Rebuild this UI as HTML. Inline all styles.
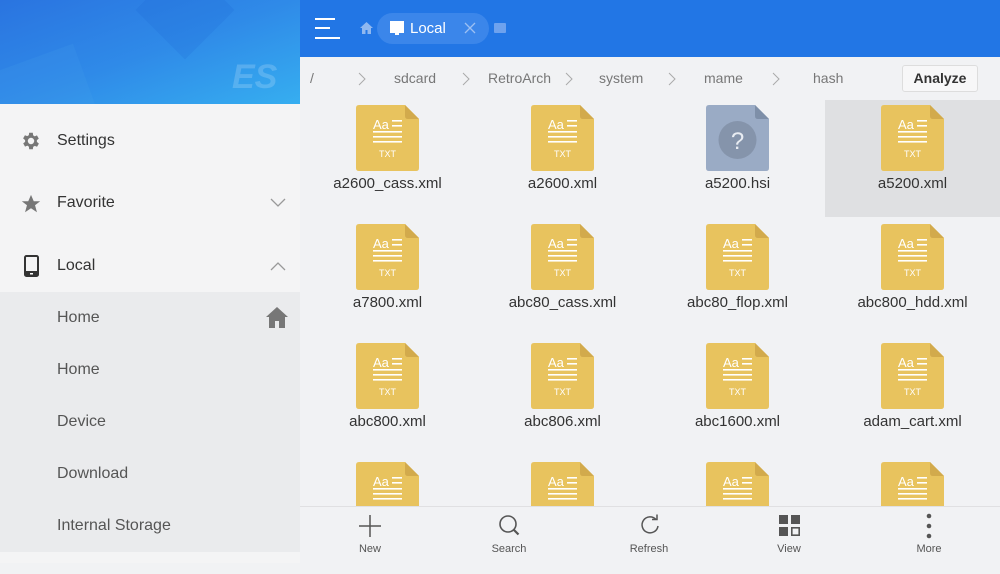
<!DOCTYPE html>
<html><head><meta charset="utf-8"><style>
*{margin:0;padding:0;box-sizing:border-box}
body{width:1000px;height:563px;overflow:hidden;font-family:"Liberation Sans",sans-serif;background:#f1f2f4;position:relative}
.abs{position:absolute}
#side{left:0;top:0;width:300px;height:563px;background:#f4f4f5}
#hero{left:0;top:0;width:300px;height:104px;background:linear-gradient(160deg,#2a74e0 0%,#2f8ae8 50%,#36aef0 100%);overflow:hidden}
.mi{position:absolute;left:57px;font-size:16px;color:#333}
.si{position:absolute;left:57px;font-size:16px;color:#555}
#sub{left:0;top:292px;width:300px;height:260px;background:#eaebed}
#top{left:300px;top:0;width:700px;height:57px;background:#2276e5}
#crumb{left:300px;top:57px;width:700px;height:43px;background:#f1f2f4;font-size:14px;color:#777}
.cr{position:absolute;top:13px}
.ch{position:absolute;top:15px}
.cell{position:absolute;width:175px;height:117px}
.cell svg{position:absolute;left:56px;top:5px}
.cell span{position:absolute;left:0;width:175px;text-align:center;top:75px;font-size:15px;color:#333}
#bot{left:300px;top:506px;width:700px;height:57px;background:#f1f2f4;border-top:1px solid #e0e0e2}
.bt{position:absolute;top:36px;width:80px;text-align:center;font-size:11px;color:#555}
</style></head><body>
<svg width="0" height="0" style="position:absolute"><defs>
<symbol id="f" viewBox="0 0 63 66"><path d="M3 0H49L63 14V63Q63 66 60 66H3Q0 66 0 63V3Q0 0 3 0Z" fill="#e8c35e"/><path d="M49 0L63 14H52Q49 14 49 11Z" fill="#d2aa4c"/>
<text x="17" y="24" font-family="Liberation Sans" font-size="13" fill="#fff">Aa</text><rect x="36" y="15" width="10" height="1.6" fill="#fff"/><rect x="36" y="20" width="10" height="1.6" fill="#fff"/><rect x="17" y="26" width="29" height="1.6" fill="#fff"/><rect x="17" y="31" width="29" height="1.6" fill="#fff"/><rect x="17" y="36" width="29" height="1.6" fill="#fff"/><text x="31.5" y="52" text-anchor="middle" font-family="Liberation Sans" font-size="9" fill="#fff">TXT</text></symbol>
<symbol id="c" viewBox="0 0 8 14"><path d="M1 1l6 6-6 6" fill="none" stroke="#aaa" stroke-width="1"/></symbol>
</defs></svg>
<div id="side" class="abs"></div>
<div id="hero" class="abs">
<div class="abs" style="left:150px;top:-25px;width:70px;height:70px;background:rgba(30,100,210,.18);transform:rotate(45deg)"></div>
<div class="abs" style="left:-20px;top:60px;width:110px;height:80px;background:rgba(80,170,240,.12);transform:rotate(-20deg)"></div>
<div class="abs" style="left:232px;top:58px;font-size:34px;font-weight:bold;font-style:italic;color:rgba(255,255,255,.18)">ES</div>
</div>
<svg class="abs" style="left:20px;top:130px" width="22" height="22" viewBox="0 0 24 24"><path fill="#777" d="M19.4 13a7.5 7.5 0 000-2l2.1-1.6-2-3.5-2.5 1a7 7 0 00-1.7-1L15 3h-4l-.4 2.7a7 7 0 00-1.7 1l-2.5-1-2 3.5L6.6 11a7.5 7.5 0 000 2l-2.1 1.6 2 3.5 2.5-1a7 7 0 001.7 1L11 21h4l.4-2.7a7 7 0 001.7-1l2.5 1 2-3.5zM13 15.5a3.5 3.5 0 110-7 3.5 3.5 0 010 7z" transform="translate(-1 0)"/></svg>
<div class="mi" style="top:132px">Settings</div>
<svg class="abs" style="left:20px;top:193px" width="22" height="22" viewBox="0 0 24 24"><path fill="#777" d="M12 2l3 7h7l-5.6 4.4 2.1 7.6L12 16.6 5.5 21l2.1-7.6L2 9h7z"/></svg>
<div class="mi" style="top:194px">Favorite</div>
<svg class="abs" style="left:270px;top:198px" width="16" height="10"><path d="M1 1l7 7 7-7" fill="none" stroke="#999" stroke-width="1.3"/></svg>
<svg class="abs" style="left:24px;top:255px" width="16" height="22"><rect x="1" y="1" width="13" height="20" rx="1.5" fill="none" stroke="#333" stroke-width="2"/><rect x="1" y="16" width="13" height="5" fill="#333"/><rect x="6" y="18" width="3" height="1.5" fill="#fff"/></svg>
<div class="mi" style="top:257px">Local</div>
<svg class="abs" style="left:270px;top:261px" width="16" height="10"><path d="M1 9l7-7 7 7" fill="none" stroke="#999" stroke-width="1.3"/></svg>
<div id="sub" class="abs"></div>
<div class="si" style="top:309px">Home</div>
<svg class="abs" style="left:266px;top:307px" width="22" height="21" viewBox="0 0 22 21"><path fill="#777" d="M11 0L0 10h3v11h6v-7h4v7h6V10h3z"/></svg>
<div class="si" style="top:361px">Home</div>
<div class="si" style="top:413px">Device</div>
<div class="si" style="top:465px">Download</div>
<div class="si" style="top:517px">Internal Storage</div>

<div id="top" class="abs">
<div class="abs" style="left:15px;top:18px;width:20px;height:2px;background:#fff"></div>
<div class="abs" style="left:15px;top:27px;width:15px;height:2px;background:#fff"></div>
<div class="abs" style="left:15px;top:37px;width:25px;height:2px;background:#fff"></div>
<svg class="abs" style="left:60px;top:22px" width="13" height="12"><path fill="#8fb8f0" d="M6.5 0L0 6h2v6h3.5V8h2v4H11V6h2z"/></svg>
<div class="abs" style="left:77px;top:13px;width:112px;height:31px;border-radius:16px;background:#3b86ea"></div>
<svg class="abs" style="left:89px;top:21px" width="16" height="14"><path fill="#fff" d="M1 0h14v12H10v2H6v-2H1z"/></svg>
<div class="abs" style="left:110px;top:20px;font-size:15px;color:#fff">Local</div>
<svg class="abs" style="left:164px;top:22px" width="12" height="12"><path d="M1 1l10 10M11 1L1 11" stroke="#9cc0f3" stroke-width="1.3"/></svg>
<div class="abs" style="left:194px;top:23px;width:12px;height:10px;background:#6ea2ee;border-radius:1px"></div>
</div>
<div id="crumb" class="abs">
<span class="cr" style="left:10px">/</span>
<svg class="ch" style="left:58px" width="8" height="14"><use href="#c"/></svg>
<span class="cr" style="left:94px">sdcard</span>
<svg class="ch" style="left:162px" width="8" height="14"><use href="#c"/></svg>
<span class="cr" style="left:188px">RetroArch</span>
<svg class="ch" style="left:265px" width="8" height="14"><use href="#c"/></svg>
<span class="cr" style="left:299px">system</span>
<svg class="ch" style="left:368px" width="8" height="14"><use href="#c"/></svg>
<span class="cr" style="left:404px">mame</span>
<svg class="ch" style="left:472px" width="8" height="14"><use href="#c"/></svg>
<span class="cr" style="left:513px">hash</span>
<div class="abs" style="left:602px;top:8px;width:76px;height:27px;background:#f7f7f8;border:1px solid #ddd;border-radius:3px;font-size:14px;font-weight:bold;color:#333;text-align:center;line-height:25px">Analyze</div>
</div>

<div class="abs" style="left:825px;top:100px;width:175px;height:117px;background:#dfe0e2"></div>
<div class="cell" style="left:300px;top:100px"><svg width="63" height="66"><use href="#f"/></svg><span>a2600_cass.xml</span></div>
<div class="cell" style="left:475px;top:100px"><svg width="63" height="66"><use href="#f"/></svg><span>a2600.xml</span></div>
<div class="cell" style="left:650px;top:100px"><svg width="63" height="66" viewBox="0 0 63 66"><path d="M3 0H49L63 14V63Q63 66 60 66H3Q0 66 0 63V3Q0 0 3 0Z" fill="#9aabc5"/><path d="M49 0L63 14H52Q49 14 49 11Z" fill="#7e8fa8"/><circle cx="31.5" cy="35" r="19" fill="#8594ab"/><text x="31.5" y="44" text-anchor="middle" font-family="Liberation Sans" font-size="24" fill="#e8ecf2">?</text></svg><span>a5200.hsi</span></div>
<div class="cell" style="left:825px;top:100px"><svg width="63" height="66"><use href="#f"/></svg><span>a5200.xml</span></div>
<div class="cell" style="left:300px;top:219px"><svg width="63" height="66"><use href="#f"/></svg><span>a7800.xml</span></div>
<div class="cell" style="left:475px;top:219px"><svg width="63" height="66"><use href="#f"/></svg><span>abc80_cass.xml</span></div>
<div class="cell" style="left:650px;top:219px"><svg width="63" height="66"><use href="#f"/></svg><span>abc80_flop.xml</span></div>
<div class="cell" style="left:825px;top:219px"><svg width="63" height="66"><use href="#f"/></svg><span>abc800_hdd.xml</span></div>
<div class="cell" style="left:300px;top:338px"><svg width="63" height="66"><use href="#f"/></svg><span>abc800.xml</span></div>
<div class="cell" style="left:475px;top:338px"><svg width="63" height="66"><use href="#f"/></svg><span>abc806.xml</span></div>
<div class="cell" style="left:650px;top:338px"><svg width="63" height="66"><use href="#f"/></svg><span>abc1600.xml</span></div>
<div class="cell" style="left:825px;top:338px"><svg width="63" height="66"><use href="#f"/></svg><span>adam_cart.xml</span></div>
<div class="cell" style="left:300px;top:457px"><svg width="63" height="66"><use href="#f"/></svg></div>
<div class="cell" style="left:475px;top:457px"><svg width="63" height="66"><use href="#f"/></svg></div>
<div class="cell" style="left:650px;top:457px"><svg width="63" height="66"><use href="#f"/></svg></div>
<div class="cell" style="left:825px;top:457px"><svg width="63" height="66"><use href="#f"/></svg></div>

<div id="bot" class="abs">
<svg class="abs" style="left:59px;top:8px" width="22" height="22"><path d="M11 0v22M0 11h22" stroke="#555" stroke-width="1.5"/></svg>
<div class="bt" style="left:30px">New</div>
<svg class="abs" style="left:198px;top:7px" width="24" height="24"><circle cx="10" cy="10" r="8" fill="none" stroke="#555" stroke-width="1.6"/><path d="M15.5 15.5l5 5" stroke="#555" stroke-width="2.2"/></svg>
<div class="bt" style="left:169px">Search</div>
<svg class="abs" style="left:339px;top:7px" width="22" height="22"><path d="M17 5.5A8 8 0 1 0 19 12" fill="none" stroke="#555" stroke-width="1.5"/><path d="M13 5.5h5v-5" fill="none" stroke="#555" stroke-width="1.5"/></svg>
<div class="bt" style="left:309px">Refresh</div>
<svg class="abs" style="left:479px;top:8px" width="21" height="21"><rect x="0" y="0" width="9" height="9" fill="#555"/><rect x="12" y="0" width="9" height="9" fill="#555"/><rect x="0" y="12" width="9" height="9" fill="#555"/><rect x="12.8" y="12.8" width="7.4" height="7.4" fill="none" stroke="#555" stroke-width="1.6"/></svg>
<div class="bt" style="left:449px">View</div>
<svg class="abs" style="left:626px;top:6px" width="6" height="26"><circle cx="3" cy="3" r="2.3" fill="#555"/><circle cx="3" cy="13" r="2.3" fill="#555"/><circle cx="3" cy="23" r="2.3" fill="#555"/></svg>
<div class="bt" style="left:589px">More</div>
</div>
</body></html>
